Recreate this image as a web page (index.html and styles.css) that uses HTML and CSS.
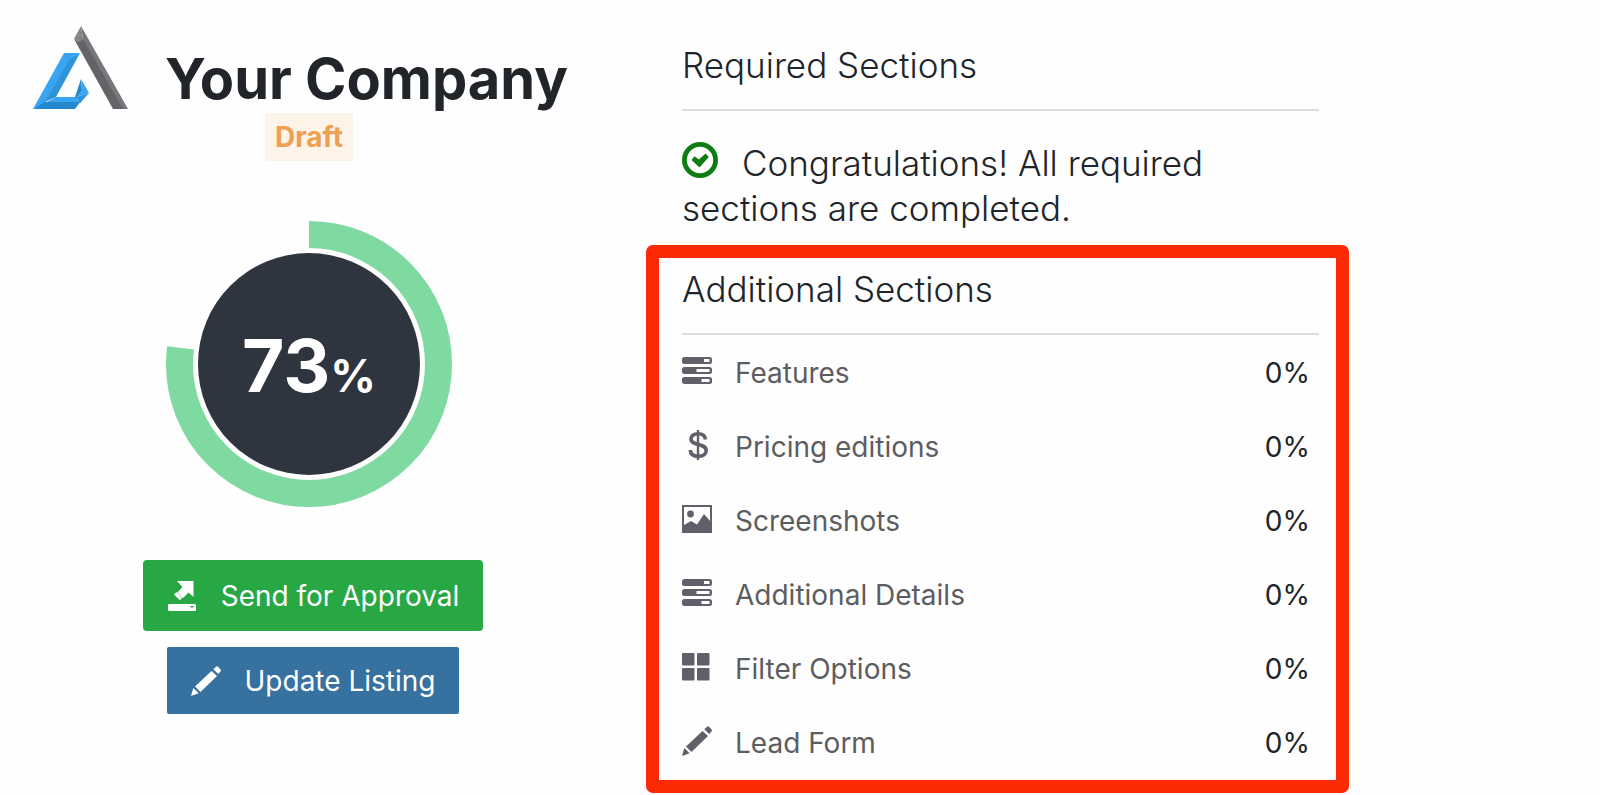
FILE: index.html
```
<!DOCTYPE html>
<html lang="en">
  <head>
    <meta charset="UTF-8" />
    <meta name="viewport" content="width=device-width, initial-scale=1" />
    <title>Your Company</title>
    <link rel="stylesheet" href="styles.css" />
  </head>
  <body>
    <!-- shared icons -->
    <svg class="sprite" aria-hidden="true">
      <symbol id="icon-servers" viewBox="0 0 30 28">
        <path fill-rule="evenodd" d="M2.500 0h25A2.500 2.500 0 0 1 30 2.500v2A2.500 2.500 0 0 1 27.500 7h-25A2.500 2.500 0 0 1 0 4.500v-2A2.500 2.500 0 0 1 2.500 0zM22 2v3h5.500V2z" />
        <path fill-rule="evenodd" d="M2.500 10h25a2.500 2.500 0 0 1 2.500 2.500v2a2.500 2.500 0 0 1-2.500 2.500h-25A2.500 2.500 0 0 1 0 14.500v-2A2.500 2.500 0 0 1 2.500 10zM14.500 12v3h13v-3z" />
        <path fill-rule="evenodd" d="M2.500 20h25a2.500 2.500 0 0 1 2.500 2.500v2a2.500 2.500 0 0 1-2.500 2.500h-25A2.500 2.500 0 0 1 0 24.500v-2A2.500 2.500 0 0 1 2.500 20zM19.500 22v3h8v-3z" />
      </symbol>
      <symbol id="icon-dollar" viewBox="0 0 30 30">
        <path d="M16 0v30" fill="none" stroke="currentColor" stroke-width="2.400" />
        <path d="M23.500 9.500C23 5.500 20 3.800 16 3.800c-4.200 0-7 2-7 5.200 0 7.200 15.200 3.600 15.200 11.400 0 3.700-3.200 5.800-8 5.800-4.700 0-7.700-2-8-6.200" fill="none" stroke="currentColor" stroke-width="3.600" />
      </symbol>
      <symbol id="icon-image" viewBox="0 0 30 28">
        <path fill-rule="evenodd" d="M.5 0h29a.5.5 0 0 1 .5.5v27a.5.5 0 0 1-.5.5H.5a.5.5 0 0 1-.5-.5V.5A.5.5 0 0 1 .5 0zM2 2v18l7-4 6 3.500 7-10.500 6 7V2z" />
        <circle cx="8.500" cy="9" r="3.400" />
      </symbol>
      <symbol id="icon-grid" viewBox="0 0 30 28">
        <rect x="0" y="0" width="12.500" height="12.500" rx="1" />
        <rect x="15" y="0" width="12.500" height="12.500" rx="1" />
        <rect x="0" y="15" width="12.500" height="12.500" rx="1" />
        <rect x="15" y="15" width="12.500" height="12.500" rx="1" />
      </symbol>
      <symbol id="icon-pencil" viewBox="0 0 30 30">
        <path d="M0 30l2.300-8 5.400 5.300zM4 20.500L20.500 5l5.500 5L9.500 26zM22.300 3.300L25 .700c.700-.700 1.400-.700 2 0l2.500 2.700c.600.700.600 1.400 0 2L27.200 8z" />
      </symbol>
      <symbol id="icon-send" viewBox="0 0 28 30">
        <path d="M9 0h16.500v16l-5-4.500-5.500 5.500-5.500-5.500L14.500 6zM8.500 11l5.800 5.800-2.500 2.500L6 13.500z" />
        <path fill-rule="evenodd" d="M1 23h26a1 1 0 0 1 1 1v5a1 1 0 0 1-1 1H1a1 1 0 0 1-1-1v-5a1 1 0 0 1 1-1zM22.500 25v1.500h3V25z" />
      </symbol>
      <symbol id="icon-check" viewBox="0 0 36 36">
        <circle cx="18" cy="18" r="15.600" fill="none" stroke="currentColor" stroke-width="4.800" />
        <path d="M9.500 18l3-3.700 4.400 3.200 6.700-6 3.200 3.500-9.300 10.500z" />
      </symbol>
    </svg>

    <main class="listing">
      <section class="summary">
        <header class="company">
          <svg class="logo" viewBox="0 0 96 84" aria-hidden="true">
            <path fill="#39a5f2" d="M31 27h16L36 35 12 77 0 83z" />
            <path fill="#2f93d8" d="M47 27L23 71l-11 5 24-42z" />
            <path fill="#39a5f2" d="M23 71h20l4 6H12z" />
            <path fill="#2488cd" d="M12 76h35l-5 7H0z" />
            <path fill="#2786c9" d="M48 53l1 12-6 7-1-1z" />
            <path fill="#39a5f2" d="M48 53l8 14-13 4 6-6z" />
            <path fill="#2d93dc" d="M56 67L42 83l5-6-4-6z" />
            <path fill="#66676b" d="M41 13l5 3 38 67h-4z" />
            <path fill="#77787c" d="M48 0l47 83H84L46 16l4-3z" />
            <path fill="#636468" d="M50 13l40 70h-9L45 16z" />
            <path fill="#85868a" d="M48 0l2 13-4 3-5-3z" />
          </svg>
          <h1 class="company-name">Your Company</h1>
        </header>
        <span class="status">Draft</span>

        <div class="progress">
          <svg class="progress-ring" viewBox="0 0 286 286" aria-hidden="true">
            <circle class="progress-track" cx="143" cy="143" r="129.500" pathLength="100" transform="rotate(-90 143 143)" />
            <circle class="progress-disc" cx="143" cy="143" r="111" />
          </svg>
          <div class="progress-value">73<span class="progress-unit">%</span></div>
        </div>

        <div class="actions">
          <button type="button" class="btn btn-send">
            <svg class="btn-icon" aria-hidden="true"><use href="#icon-send" /></svg>
            Send for Approval
          </button>
          <button type="button" class="btn btn-update">
            <svg class="btn-icon" aria-hidden="true"><use href="#icon-pencil" /></svg>
            Update Listing
          </button>
        </div>
      </section>

      <div class="sections">
        <section class="required">
          <h2 class="section-title">Required Sections</h2>
          <p class="congrats">
            <svg class="check" aria-hidden="true"><use href="#icon-check" /></svg>Congratulations! All required sections are completed.
          </p>
        </section>

        <section class="additional">
          <h2 class="section-title">Additional Sections</h2>
          <ul class="items">
            <li class="item">
              <svg class="item-icon" aria-hidden="true"><use href="#icon-servers" /></svg>
              <a class="item-link" href="#">Features</a>
              <span class="item-value">0%</span>
            </li>
            <li class="item">
              <svg class="item-icon" aria-hidden="true"><use href="#icon-dollar" /></svg>
              <a class="item-link" href="#">Pricing editions</a>
              <span class="item-value">0%</span>
            </li>
            <li class="item">
              <svg class="item-icon" aria-hidden="true"><use href="#icon-image" /></svg>
              <a class="item-link" href="#">Screenshots</a>
              <span class="item-value">0%</span>
            </li>
            <li class="item">
              <svg class="item-icon" aria-hidden="true"><use href="#icon-servers" /></svg>
              <a class="item-link" href="#">Additional Details</a>
              <span class="item-value">0%</span>
            </li>
            <li class="item">
              <svg class="item-icon" aria-hidden="true"><use href="#icon-grid" /></svg>
              <a class="item-link" href="#">Filter Options</a>
              <span class="item-value">0%</span>
            </li>
            <li class="item">
              <svg class="item-icon" aria-hidden="true"><use href="#icon-pencil" /></svg>
              <a class="item-link" href="#">Lead Form</a>
              <span class="item-value">0%</span>
            </li>
          </ul>
        </section>
      </div>
    </main>
  </body>
</html>
```
FILE: styles.css
```
* {
  box-sizing: border-box;
}
body {
  margin: 0;
  font-family: Inter, "Liberation Sans", sans-serif;
  color: #212529;
  background: #fefefe;
}
.sprite {
  display: none;
}
.listing {
  display: grid;
  grid-template-columns: 618fr 703fr;
  column-gap: 28px;
  padding-right: 251px;
}

/* left column */
.summary {
  display: flex;
  flex-direction: column;
  align-items: center;
  padding-top: 26px;
}
.company {
  display: flex;
  align-items: flex-start;
  align-self: stretch;
  gap: 36px;
  padding-left: 33px;
  height: 87px;
}
.logo {
  flex: none;
  width: 96px;
  height: 84px;
}
.company-name {
  margin: 17px 0 0;
  font-size: 56px;
  font-weight: 700;
  line-height: 72px;
  white-space: nowrap;
}
.status {
  padding: 0 10px;
  font-size: 28px;
  font-weight: 700;
  line-height: 48px;
  color: #eda050;
  background: #fef3e8;
}
.progress {
  display: grid;
  place-items: center;
  margin-top: 60px;
}
.progress-ring,
.progress-value {
  grid-area: 1 / 1;
}
.progress-ring {
  width: 286px;
  height: 286px;
}
.progress-track {
  fill: none;
  stroke: #7edaa1;
  stroke-width: 27;
  stroke-dasharray: 77 23;
}
.progress-disc {
  fill: #2f353e;
}
.progress-value {
  padding-top: 14px;
  font-size: 73px;
  font-weight: 700;
  line-height: 80px;
  color: #fff;
}
.progress-unit {
  font-size: 45px;
}
.actions {
  display: flex;
  flex-direction: column;
  align-items: center;
  gap: 16px;
  margin-top: 53px;
  padding-left: 8px;
}
.btn {
  display: flex;
  align-items: center;
  gap: 24px;
  padding: 0 24px;
  border: 0;
  font-family: inherit;
  font-size: 28px;
  color: #fff;
  cursor: pointer;
}
.btn-icon {
  width: 30px;
  height: 30px;
  fill: currentColor;
}
.btn-send {
  height: 71px;
  border-radius: 4px;
  background: #28a745;
}
.btn-update {
  height: 67px;
  border-radius: 2px;
  background: #36719f;
}

/* right column */
.required {
  padding: 42px 30px 0 36px;
}
.section-title {
  margin: 0;
  padding-bottom: 21px;
  border-bottom: 2px solid #dcdddf;
  font-size: 35px;
  font-weight: 300;
  line-height: 46px;
}
.congrats {
  max-width: 560px;
  margin: 30px 0 14px;
  font-size: 35px;
  font-weight: 300;
  line-height: 45px;
}
.check {
  width: 36px;
  height: 36px;
  margin-right: 24px;
  vertical-align: -2px;
  color: #0e7d12;
  fill: currentColor;
}
.additional {
  padding: 8px 17px 0 23px;
  border: 13px solid #fd2a03;
  border-radius: 7px;
}
.items {
  margin: 0;
  padding: 1px 9px 0 0;
  list-style: none;
}
.item {
  display: flex;
  align-items: center;
  height: 74px;
  font-size: 28px;
}
.item-icon {
  width: 30px;
  height: 30px;
  margin: 0 23px 4px 0;
  color: #615f6a;
  fill: currentColor;
}
.item-link {
  color: #5c5d61;
  text-decoration: none;
}
.item-value {
  margin-left: auto;
}
```
